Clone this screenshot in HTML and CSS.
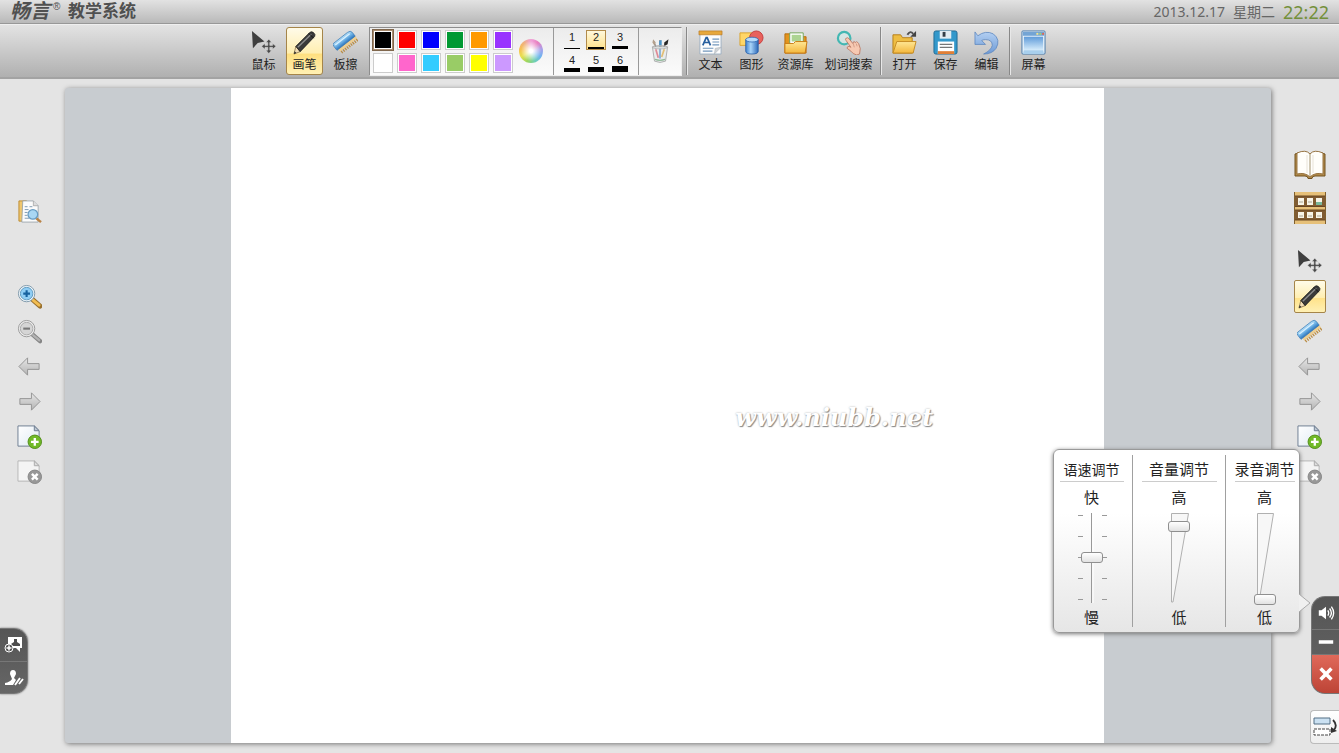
FILE: index.html
```html
<!DOCTYPE html>
<html lang="zh-CN">
<head>
<meta charset="utf-8">
<title>畅言教学系统</title>
<link rel="stylesheet" href="styles.css">
</head>
<body>
<svg class="sprite" aria-hidden="true">
  <defs>
    <linearGradient id="g-blue" x1="0" y1="0" x2="1" y2="0"><stop offset="0" stop-color="#3f82cf"/><stop offset=".4" stop-color="#a9d4f8"/><stop offset="1" stop-color="#2b68b8"/></linearGradient>
    <linearGradient id="g-comb" x1="0" y1="0" x2="0" y2="1"><stop offset="0" stop-color="#b5dff8"/><stop offset=".5" stop-color="#6fb3e6"/><stop offset="1" stop-color="#2c74bd"/></linearGradient>
    <linearGradient id="g-fold" x1="0" y1="0" x2="0" y2="1"><stop offset="0" stop-color="#ffe795"/><stop offset="1" stop-color="#f3b73d"/></linearGradient>
    <linearGradient id="g-gray" x1="0" y1="0" x2="0" y2="1"><stop offset="0" stop-color="#e6e6e6"/><stop offset="1" stop-color="#b4b4b4"/></linearGradient>
    <linearGradient id="g-screen" x1="0" y1="0" x2="0" y2="1"><stop offset="0" stop-color="#5f9bd9"/><stop offset="1" stop-color="#d6ecfb"/></linearGradient>
    <linearGradient id="g-page" x1="0" y1="0" x2="1" y2="1"><stop offset="0" stop-color="#ffffff"/><stop offset="1" stop-color="#dfeaf3"/></linearGradient>
    <linearGradient id="g-undo" x1="0" y1="0" x2="0" y2="1"><stop offset="0" stop-color="#b4d0f2"/><stop offset="1" stop-color="#6d9ad6"/></linearGradient>
  </defs>
  <symbol id="mouse" viewBox="0 0 26 26"><path d="M1 1l1 18 5-5.500 7-1.500z" fill="#3f3f3f"/><path d="M18.500 9.500l3 3.500h-2v3h3v-2l3.500 3-3.500 3v-2h-3v3h2l-3 3.500-3-3.500h2v-3h-3v2l-3.500-3 3.500-3v2h3v-3h-2z" fill="#4a4a4a" stroke="#ddd" stroke-width=".5"/></symbol>
  <symbol id="pencil" viewBox="0 0 26 26"><path d="M2 25l2-8 4.500 5.500z" fill="#f3ddb4" stroke="#806b45" stroke-width=".8"/><path d="M2 25l.8-3 1.700 2z" fill="#222"/><path d="M4 17L18.500 2.500q2-1.500 4 .3 2.300 2 1 4L8.500 22.500z" fill="#3a3a3a" stroke="#191919" stroke-width=".8"/><path d="M6 18L20 4.500" stroke="#8c8c8c" stroke-width="1.500"/><path d="M17.500 3.500l5 5" stroke="#111" stroke-width="1"/></symbol>
  <symbol id="comb" viewBox="0 0 26 26"><g transform="rotate(-38 13 13)"><path d="M4 14v6M6.500 14v6M9 14v6M11.500 14v6M14 14v6M16.500 14v6M19 14v6M21.500 14v6M24 14v6" stroke="#b98c45" stroke-width="1.300"/><path d="M3 13h22v4H3z" fill="#edce91"/><path d="M3 6h18q4 0 4 3v5H1V9q0-3 2-3z" fill="url(#g-comb)" stroke="#3778b4" stroke-width=".7"/><path d="M3 8.500h19" stroke="#d8f0ff" stroke-width="1.500"/></g></symbol>
  <symbol id="cup" viewBox="0 0 26 30"><path d="M9 14L6 4M13 14V2M16 14l4-9" stroke="#7f7064" stroke-width="1.500"/><path d="M5 1l3 4-2 3-2-3z" fill="#b4a08c"/><path d="M12 3l3-1v8h-3z" fill="#4c94c9"/><path d="M18 5l5-4-1 6-4 2z" fill="#252525"/><path d="M4 10h18l-2.500 17q-6.500 3-13 0z" fill="#e9ecec" stroke="#a5a5a5"/><path d="M8 13l3 10" stroke="#df8a96" stroke-width="2"/><path d="M13 12v12" stroke="#80abd5" stroke-width="2"/><path d="M18 13l-3 9" stroke="#e2bd73" stroke-width="2"/><path d="M7 25q6 2 12 0" fill="none" stroke="#91b99a" stroke-width="1.500"/><ellipse cx="13" cy="10.500" rx="9" ry="2" fill="none" stroke="#b1b1b1"/></symbol>
  <symbol id="textdoc" viewBox="0 0 26 26"><path d="M2 2h22v23H2z" fill="#fdfdfd" stroke="#9db0c2"/><path d="M1 1h24v4H1z" fill="#e7a83c" stroke="#b97924" stroke-width=".7"/><path d="M5 16l3.500-8h1l3.500 8M6.500 13h5" fill="none" stroke="#285f9e" stroke-width="1.800"/><path d="M15 9.500h7M15 12.500h7M15 15.500h7M5 19h11M5 22h10" stroke="#7196bc" stroke-width="1.200"/><path d="M24 18l-6 1-1 6z" fill="#d0d5d9" stroke="#a5abb0" stroke-width=".5"/></symbol>
  <symbol id="shapes" viewBox="0 0 26 26"><path d="M1 3h14v13H1z" fill="#ffd667" stroke="#dba22d"/><circle cx="18" cy="8" r="7" fill="#e8625c" stroke="#c63e40"/><path d="M7 10v12q0 3 6.500 3t6.500-3V10z" fill="url(#g-blue)" stroke="#245ba6" stroke-width=".8"/><ellipse cx="13.500" cy="10" rx="6.500" ry="2.500" fill="#b5dafa" stroke="#2d66b0" stroke-width=".8"/></symbol>
  <symbol id="resource" viewBox="0 0 26 26"><path d="M2 4h8l2 3h12v17H2z" fill="#e2951e" stroke="#b86c10"/><path d="M7 3h14v13H7z" fill="#fff" stroke="#70a356"/><path d="M9 5h10v7H9z" fill="#acd492"/><path d="M2 24V14h9l2-2h12l-2 12z" fill="url(#g-fold)" stroke="#c87b12"/></symbol>
  <symbol id="search-hand" viewBox="0 0 26 26"><circle cx="8.500" cy="8.500" r="6.500" fill="#d4f3ef" fill-opacity=".5" stroke="#43b7b2" stroke-width="2.300"/><path d="M10 9q2-2 3.500 0l4 5 1-2 2 1 1-1 2 2q3 5 1 11l-3 1q-4-1-6-4l-4-3q0-2 2-2l2 1-5-7q-1-1-.5-2z" fill="#f7c9b2" stroke="#bb7864" stroke-width=".9"/><path d="M18 14l1 4M21 14l1 3" stroke="#c58a76" stroke-width=".7"/></symbol>
  <symbol id="open" viewBox="0 0 26 26"><path d="M1 5h8l2 3h10v16H1z" fill="#eebd43" stroke="#b67f19"/><path d="M1 24l4-12h20l-3 12z" fill="url(#g-fold)" stroke="#c58b23"/><path d="M16 5q3-5 6-1" fill="none" stroke="#505050" stroke-width="2"/><path d="M25 1v6h-6z" fill="#444"/></symbol>
  <symbol id="save" viewBox="0 0 26 26"><rect x="1" y="1" width="24" height="24" rx="2" fill="#3398cb" stroke="#216994"/><path d="M7 1h12v8H7z" fill="#e3edf3"/><path d="M10 2h3v5h-3z" fill="#343f48"/><path d="M5 12h17v13H5z" fill="#fff"/><path d="M7 15h13M7 18h13" stroke="#777" stroke-width="1.200"/><path d="M5 22h17v3H5z" fill="#e07f36"/></symbol>
  <symbol id="undo" viewBox="0 0 26 26"><path d="M1 2l3 4Q12 0 20 4q8 6 3 15-4 6-13 6 8-4 9-9 0-6-7-6-3 0-4 1l4 4H1z" fill="url(#g-undo)" stroke="#5c86bd" stroke-width=".8"/></symbol>
  <symbol id="screen" viewBox="0 0 26 26"><rect x="1" y="1" width="24" height="24" rx="1" fill="#e6f1fa" stroke="#4779aa"/><path d="M2 2h22v4H2z" fill="#73a4d4"/><path d="M16 3h2v2h-2z" fill="#f8e38b"/><path d="M19 3h2v2h-2z" fill="#a9d06b"/><path d="M22 3h2v2h-2z" fill="#df6754"/><path d="M3 7h20v14H3z" fill="url(#g-screen)"/><path d="M3 21h20l1 4H2z" fill="#a8cfed"/></symbol>
  <symbol id="preview" viewBox="0 0 26 26"><path d="M2 2h8v21H2z" fill="#efc66e" stroke="#bd8b32"/><path d="M6 2h11l5 5v17H5z" fill="#fbfbfb" stroke="#8f9aa3" stroke-width=".8"/><path d="M17 2v5h5" fill="#ddd" stroke="#999" stroke-width=".7"/><path d="M8 8h3M13 8h3M8 11h4M8 14h3M8 17h3M8 20h5" stroke="#7e9ab2"/><path d="M20 20l5 4" stroke="#b98346" stroke-width="2.500"/><circle cx="16.500" cy="16" r="5" fill="#a9d7f4" stroke="#679bc2" stroke-width="1.300"/></symbol>
  <symbol id="zoom-in" viewBox="0 0 26 26"><path d="M16 16l8 7" stroke="#99702d" stroke-width="5" stroke-linecap="round"/><path d="M17 17l6 5" stroke="#f2bd52" stroke-width="3" stroke-linecap="round"/><circle cx="10" cy="10" r="8.500" fill="#f1f7fa" stroke="#7e98aa"/><circle cx="10" cy="10" r="6.500" fill="#8fcdf4" stroke="#609abf"/><path d="M10 6.500v7M6.500 10h7" stroke="#17629f" stroke-width="2.200"/></symbol>
  <symbol id="zoom-out" viewBox="0 0 26 26"><path d="M16 16l8 7" stroke="#858585" stroke-width="4.500" stroke-linecap="round"/><path d="M17 17l6 5" stroke="#b3b3b3" stroke-width="2.500" stroke-linecap="round"/><circle cx="10" cy="10" r="8.500" fill="#eee" stroke="#999"/><circle cx="10" cy="10" r="6.500" fill="#d5d5d5" stroke="#aaa"/><path d="M6.500 10h7" stroke="#777" stroke-width="2.200"/></symbol>
  <symbol id="left" viewBox="0 0 26 26"><path d="M2 13l9-9v6h12v6H11v6z" fill="url(#g-gray)" stroke="#949494"/></symbol>
  <symbol id="right" viewBox="0 0 26 26"><path d="M24 13l-9-9v6H3v6h12v6z" fill="url(#g-gray)" stroke="#949494"/></symbol>
  <symbol id="page-add" viewBox="0 0 26 26"><path d="M1 2h17l5 5v16H1z" fill="url(#g-page)" stroke="#6d7d91"/><path d="M18 2v5h5z" fill="#bdc8d4" stroke="#6d7d91"/><circle cx="18.500" cy="18.500" r="7" fill="#70b927" stroke="#518d18"/><path d="M18.500 14.500v8M14.500 18.500h8" stroke="#fff" stroke-width="2.400"/></symbol>
  <symbol id="page-del" viewBox="0 0 26 26"><path d="M1 2h17l5 5v16H1z" fill="#f4f4f4" stroke="#b5b5b5"/><path d="M18 2v5h5z" fill="#ddd" stroke="#aaa"/><circle cx="18.500" cy="18.500" r="7" fill="#989898" stroke="#858585"/><path d="M15.500 15.500l6 6M21.500 15.500l-6 6" stroke="#fff" stroke-width="2.500"/></symbol>
  <symbol id="book" viewBox="0 0 32 30"><path d="M1 4v22h10q3 0 3 2.500h4q0-2.500 3-2.500h10V4l-3-1v20H4V3z" fill="#b18a4a" stroke="#72521f"/><path d="M3 3q9-4 13 1 4-5 13-1v21q-8-2-13 3-5-5-13-3z" fill="#fffefa" stroke="#977442"/><path d="M16 4v22" stroke="#c1b69c" stroke-width="1.500"/><path d="M13 5v18M19 5v18" stroke="#e8e3d8"/></symbol>
  <symbol id="shelf" viewBox="0 0 32 32"><path d="M0 0h32v32H0z" fill="#805c33"/><path d="M1 0h30v4H1zM1 15h30v3H1zM1 28h30v4H1z" fill="#e6c079"/><path d="M0 4h32M0 14.500h32M0 18h32M0 28h32" stroke="#684622"/><path d="M4 6h6v7H4zM13 6h6v7h-6zM22 6h6v7h-6zM4 20h6v6H4zM13 20h6v6h-6zM22 20h6v6h-6z" fill="#f7f4e8"/><path d="M5 10h4M14 10h4M5 24h4M14 24h4M23 24h4" stroke="#a9a594"/><path d="M22 10h6v3h-6z" fill="#79b89b"/><path d="M.5 0v32M31.500 0v32" stroke="#80602f"/></symbol>
  <symbol id="user-add" viewBox="0 0 20 18"><path d="M4 1h14v11h-2v4l-4-4H4z" fill="#fff"/><path d="M10 3h3v3l3 2v2H7V8l3-2z" fill="#4d4d4d"/><circle cx="5" cy="12" r="4" fill="#555" stroke="#fff"/><path d="M5 9.500v5M2.500 12h5" stroke="#fff" stroke-width="1.500"/></symbol>
  <symbol id="user-pen" viewBox="0 0 20 18"><path d="M6 5q0-4 3-4t3 4l-2 4 2 2-3 5H1v-2q5-1 7-4z" fill="#fff"/><path d="M11 16l5-7M15 15l4-5" stroke="#fff" stroke-width="1.900"/></symbol>
  <symbol id="speaker" viewBox="0 0 20 20"><path d="M2 7h3l5-4v14l-5-4H2z" fill="#fff"/><path d="M12 7q2 3 0 6M14 5q4 5 0 10M16 3q5 7 0 14" fill="none" stroke="#fff" stroke-width="1.500"/></symbol>
  <symbol id="minus" viewBox="0 0 20 20"><path d="M2 8h16v4H2z" fill="#fff"/></symbol>
  <symbol id="close" viewBox="0 0 20 20"><path d="M4 4l12 12M16 4L4 16" stroke="#fff" stroke-width="4"/></symbol>
  <symbol id="swap" viewBox="0 0 26 24"><path d="M2 3h16v6H2z" fill="#cbe1f2" stroke="#536e84"/><path d="M2 14h16v6H2z" fill="#fff" stroke="#444" stroke-dasharray="3 1"/><path d="M21 5q5 5 1 10" fill="none" stroke="#333" stroke-width="1.800"/><path d="M19 12v6l6-2z" fill="#333"/></symbol>
</svg>

<header class="titlebar">
  <h1 class="brand"><span class="brand-mark">畅言</span><span class="reg">®</span><span class="brand-name">教学系统</span></h1>
  <div class="clock"><span>2013.12.17</span><span>星期二</span><time class="time">22:22</time></div>
</header>

<nav class="toolbar" aria-label="工具栏">
  <div class="group">
    <button class="tool"><svg><use href="#mouse"/></svg>鼠标</button>
    <button class="tool active"><svg><use href="#pencil"/></svg>画笔</button>
    <button class="tool"><svg><use href="#comb"/></svg>板擦</button>
  </div>
  <div class="options">
    <div class="swatches">
      <button class="swatch black chosen" aria-label="黑色"></button>
      <button class="swatch red" aria-label="红色"></button>
      <button class="swatch blue" aria-label="蓝色"></button>
      <button class="swatch green" aria-label="绿色"></button>
      <button class="swatch orange" aria-label="橙色"></button>
      <button class="swatch purple" aria-label="紫色"></button>
      <button class="swatch white" aria-label="白色"></button>
      <button class="swatch pink" aria-label="粉色"></button>
      <button class="swatch sky" aria-label="天蓝"></button>
      <button class="swatch lime" aria-label="浅绿"></button>
      <button class="swatch yellow" aria-label="黄色"></button>
      <button class="swatch lilac" aria-label="淡紫"></button>
    </div>
    <button class="wheel" aria-label="更多颜色"></button>
    <div class="widths">
      <button class="width w1">1</button>
      <button class="width w2 picked">2</button>
      <button class="width w3">3</button>
      <button class="width w4">4</button>
      <button class="width w5">5</button>
      <button class="width w6">6</button>
    </div>
    <button class="cup" aria-label="笔筒"><svg><use href="#cup"/></svg></button>
  </div>
  <div class="group ruled">
    <button class="tool"><svg><use href="#textdoc"/></svg>文本</button>
    <button class="tool"><svg><use href="#shapes"/></svg>图形</button>
    <button class="tool wide"><svg><use href="#resource"/></svg>资源库</button>
    <button class="tool wider"><svg><use href="#search-hand"/></svg>划词搜索</button>
  </div>
  <div class="group ruled">
    <button class="tool"><svg><use href="#open"/></svg>打开</button>
    <button class="tool"><svg><use href="#save"/></svg>保存</button>
    <button class="tool"><svg><use href="#undo"/></svg>编辑</button>
  </div>
  <div class="group ruled">
    <button class="tool"><svg><use href="#screen"/></svg>屏幕</button>
  </div>
</nav>

<main class="workspace">
  <aside class="side side-left">
    <button class="side-btn spaced" aria-label="预览"><svg><use href="#preview"/></svg></button>
    <button class="side-btn" aria-label="放大"><svg><use href="#zoom-in"/></svg></button>
    <button class="side-btn" aria-label="缩小"><svg><use href="#zoom-out"/></svg></button>
    <button class="side-btn" aria-label="上一页"><svg><use href="#left"/></svg></button>
    <button class="side-btn" aria-label="下一页"><svg><use href="#right"/></svg></button>
    <button class="side-btn" aria-label="新建页"><svg><use href="#page-add"/></svg></button>
    <button class="side-btn" aria-label="删除页"><svg><use href="#page-del"/></svg></button>
  </aside>
  <section class="board">
    <div class="paper"><span class="watermark">www.niubb.net</span></div>
  </section>
  <aside class="side side-right">
    <button class="side-btn big" aria-label="课本"><svg><use href="#book"/></svg></button>
    <button class="side-btn big last" aria-label="书架"><svg><use href="#shelf"/></svg></button>
    <button class="side-btn" aria-label="鼠标"><svg><use href="#mouse"/></svg></button>
    <button class="side-btn on" aria-label="画笔"><svg><use href="#pencil"/></svg></button>
    <button class="side-btn" aria-label="板擦"><svg><use href="#comb"/></svg></button>
    <button class="side-btn" aria-label="上一页"><svg><use href="#left"/></svg></button>
    <button class="side-btn" aria-label="下一页"><svg><use href="#right"/></svg></button>
    <button class="side-btn" aria-label="新建页"><svg><use href="#page-add"/></svg></button>
    <button class="side-btn" aria-label="删除页"><svg><use href="#page-del"/></svg></button>
  </aside>
</main>

<div class="dock dock-left">
  <button class="dock-btn" aria-label="添加用户"><svg><use href="#user-add"/></svg></button>
  <button class="dock-btn" aria-label="用户书写"><svg><use href="#user-pen"/></svg></button>
</div>
<div class="dock dock-right">
  <button class="dock-btn" aria-label="音量"><svg><use href="#speaker"/></svg></button>
  <button class="dock-btn short" aria-label="最小化"><svg><use href="#minus"/></svg></button>
  <button class="dock-btn danger" aria-label="关闭"><svg><use href="#close"/></svg></button>
</div>
<button class="swap" aria-label="切换工具栏位置"><svg><use href="#swap"/></svg></button>

<section class="mixer">
  <div class="channel speed">
    <label for="speed">语速调节</label>
    <span class="end">快</span>
    <div class="fader">
      <svg viewBox="0 0 34 90"><path d="M16.500 0v90" stroke="#999"/><path d="M18 0v90" stroke="#fff"/><path d="M3 2.500h5M27 2.500h5M3 23.500h5M27 23.500h5M3 44.500h5M27 44.500h5M3 65.500h5M27 65.500h5M3 86.500h5M27 86.500h5" stroke="#999"/></svg>
      <input id="speed" type="range" min="0" max="100" value="51">
    </div>
    <span class="end">慢</span>
  </div>
  <div class="channel volume">
    <label for="volume">音量调节</label>
    <span class="end">高</span>
    <div class="fader">
      <svg viewBox="0 0 34 90"><path d="M9.500 .5h17L11 89H9.500z" fill="#f7f7f7" stroke="#b0b0b0"/></svg>
      <input id="volume" type="range" min="0" max="100" value="88">
    </div>
    <span class="end">低</span>
  </div>
  <div class="channel record">
    <label for="record">录音调节</label>
    <span class="end">高</span>
    <div class="fader">
      <svg viewBox="0 0 34 90"><path d="M9.500 .5h16L11 89H9.500z" fill="#f7f7f7" stroke="#b0b0b0"/></svg>
      <input id="record" type="range" min="0" max="100" value="0">
    </div>
    <span class="end">低</span>
  </div>
  <svg class="tail" viewBox="0 0 12 20"><path d="M0 1l11 9L0 19z" fill="#f0f0f0"/><path d="M0 1l11 9L0 19" fill="none" stroke="#aaa"/></svg>
</section>
</body>
</html>
```

FILE: styles.css
```css
* { box-sizing: border-box; }

body {
  margin: 0;
  height: 100vh;
  display: flex;
  flex-direction: column;
  position: relative;
  overflow: hidden;
  background: #e4e4e4;
  color: #222;
  font-family: "Noto Sans", "Noto Sans CJK SC", sans-serif;
  font-size: 12px;
}

button {
  margin: 0;
  padding: 0;
  border: 0;
  background: none;
  color: inherit;
  font: inherit;
  cursor: pointer;
}

svg { display: block; }
.sprite { position: absolute; width: 0; height: 0; }

/* Title bar */
.titlebar {
  flex: none;
  height: 24px;
  padding: 0 10px;
  display: flex;
  justify-content: space-between;
  align-items: center;
  border-bottom: 1px solid #989898;
  background: linear-gradient(#e2e2e2, #b9b9b9);
}
.brand {
  margin: 0;
  display: flex;
  align-items: center;
  color: #505050;
  font-family: "Liberation Sans", "Noto Sans CJK SC", sans-serif;
  font-size: 17px;
  font-weight: 700;
  line-height: 23px;
}
.brand-mark { font-size: 20px; font-style: italic; }
.reg {
  width: 18px;
  padding-left: 3px;
  align-self: flex-start;
  font-size: 10px;
  font-weight: 400;
  line-height: 14px;
}
.clock {
  display: flex;
  align-items: center;
  gap: 8px;
  color: #666;
  font-size: 14px;
  line-height: 22px;
}
.time { color: #73903a; font-size: 18px; }

/* Toolbar */
.toolbar {
  flex: none;
  height: 55px;
  padding-left: 243px;
  display: flex;
  align-items: center;
  border-top: 1px solid #efefef;
  border-bottom: 2px solid #a3a3a3;
  background: linear-gradient(#e3e3e3, #b0b0b0);
}
.group { display: flex; align-items: center; height: 48px; }
.group.ruled {
  padding: 0 2px 0 3px;
  border-left: 1px solid #888;
  box-shadow: inset 1px 0 #e8e8e8;
}
.group .tool {
  width: 37px;
  height: 48px;
  margin: 0 2px;
  display: flex;
  flex-direction: column;
  align-items: center;
  gap: 2px;
  padding-top: 2px;
  border: 1px solid transparent;
  border-radius: 3px;
  line-height: 16px;
  white-space: nowrap;
}
.tool svg { width: 25px; height: 25px; }
.group .wide { width: 43px; }
.group .wider { width: 55px; }
.group .active { border-color: #a58549; background: linear-gradient(#fffbe9, #ffeeb0 55%, #ffdf7e 56%, #fff0b4); }

.options {
  height: 49px;
  margin: 0 4px 0 3px;
  display: flex;
  align-items: center;
  border: 1px solid #8d8d8d;
  border-right-color: #eee;
  border-bottom-color: #eee;
  background: linear-gradient(#ececec, #fbfbfb);
}
.swatches {
  display: grid;
  grid-template-columns: repeat(6, 20px);
  gap: 3px 4px;
  padding: 0 3px;
}
.swatch { width: 20px; height: 20px; border: 1px solid #ccc; box-shadow: inset 0 0 0 1px #fff; }
.chosen { outline: 1px solid #80674d; border-color: #a98c70; }
.black { background: #000; }
.red { background: #f00; }
.blue { background: #00f; }
.green { background: #093; }
.orange { background: #f90; }
.purple { background: #93f; }
.white { background: #fff; }
.pink { background: #f6c; }
.sky { background: #3cf; }
.lime { background: #9c6; }
.yellow { background: #ff0; }
.lilac { background: #c9f; }
.wheel {
  width: 24px;
  height: 24px;
  margin: 0 10px 0 3px;
  border-radius: 50%;
  background:
    radial-gradient(circle, #fff 10%, transparent 60%),
    conic-gradient(#f0a0d8, #e87fc0, #a9a2ea, #6fb4f0, #6fd0b4, #9cd660, #e8e050, #f7c050, #efb080, #f0a0d8);
}
.widths {
  display: grid;
  grid-template-columns: repeat(3, 20px);
  gap: 3px 4px;
  padding: 0 8px;
  border-left: 1px solid #999;
  border-right: 1px solid #999;
  height: 47px;
  align-content: center;
}
.width {
  height: 20px;
  display: flex;
  flex-direction: column;
  align-items: center;
  justify-content: space-between;
  border: 1px solid transparent;
  font-family: "Liberation Sans", sans-serif;
  font-size: 11px;
  line-height: 12px;
}
.width::after { content: ""; width: 16px; height: 1px; background: #000; }
.w2::after { height: 2px; }
.w3::after { height: 3px; }
.w4::after { height: 4px; }
.w5::after { height: 5px; }
.w6::after { height: 6px; }
.picked { border-color: #b28b4b; background: linear-gradient(#fff8dc, #ffe18a); }
.cup { width: 42px; display: flex; justify-content: center; }
.cup svg { width: 22px; height: 26px; }

/* Workspace */
.workspace { flex: 1; min-height: 0; display: flex; }
.side { flex: none; display: flex; flex-direction: column; align-items: center; }
.side-left { width: 65px; padding: 115px 7px 0 0; }
.side-right { width: 68px; padding: 64px 0 0 9px; }
.side-btn { width: 32px; height: 35px; display: grid; place-items: center; flex: none; }
.side-btn svg { width: 25px; height: 25px; }
.side .spaced { margin-bottom: 50px; }
.side .big { height: 43px; }
.side .last { margin-bottom: 15px; }
.big svg { width: 32px; height: 32px; }
.side .on {
  height: 33px;
  margin: 1px 0;
  border: 1px solid #a58549;
  border-radius: 2px;
  background: linear-gradient(#fffbe9, #ffeeb0 55%, #ffe28a 56%, #fff0b4);
}
.board {
  flex: 1;
  margin: 9px 0 10px;
  padding: 0 167px 0 166px;
  display: flex;
  border-radius: 3px;
  background: #c8ccd0;
  box-shadow: 1px 1px 5px #777;
}
.paper {
  flex: 1;
  padding: 4px 171px 0 0;
  display: flex;
  align-items: center;
  justify-content: flex-end;
  background: #fff;
}
.watermark {
  color: #fff;
  font: italic 700 24px "DejaVu Serif", serif;
  text-shadow: 1px 1px 1px #888, 0 0 2px #aaa;
}

/* Edge docks lie over the workspace */
.dock {
  position: absolute;
  width: 28px;
  overflow: hidden;
  border: 1px solid #777;
  background: linear-gradient(#555, #666);
  display: flex;
  flex-direction: column;
}
.dock-left { left: 0; bottom: 59px; border-left: 0; border-radius: 0 14px 14px 0; box-shadow: 0 0 2px #666; }
.dock-right { right: 0; bottom: 59px; border-right: 0; border-radius: 14px 0 0 14px; }
.dock-btn { height: 32px; display: grid; place-items: center; }
.dock-btn + .dock-btn { border-top: 1px solid #777; }
.dock-btn svg { width: 20px; height: 18px; }
.dock .short { height: 25px; }
.dock .danger { height: 39px; background: linear-gradient(#e0695a, #bd4436); }
.swap {
  position: absolute;
  right: 0;
  bottom: 9px;
  width: 29px;
  height: 34px;
  display: grid;
  place-items: center;
  border: 1px solid #bbb;
  border-right: 0;
  border-radius: 4px 0 0 4px;
  background: linear-gradient(#fff, #eee);
}
.swap svg { width: 26px; height: 24px; }

/* Audio popup */
.mixer {
  position: absolute;
  right: 39px;
  bottom: 120px;
  padding: 5px 0;
  display: flex;
  border: 1px solid #999;
  border-radius: 6px;
  background: linear-gradient(#fff 35%, #e6e6e6);
  box-shadow: 0 1px 4px #777;
  color: #222;
}
.channel { display: flex; flex-direction: column; align-items: center; width: 93px; }
.channel + .channel { border-left: 1px solid #a0a0a0; }
.channel label {
  width: 75px;
  height: 27px;
  border-bottom: 1px solid #ccc;
  font-size: 15px;
  line-height: 29px;
  text-align: center;
  white-space: nowrap;
}
.mixer .speed { width: 78px; padding-right: 3px; }
.speed label { width: 64px; font-size: 14px; }
.mixer .record { width: 74px; padding-left: 4px; }
.record label { width: 60px; }
.end { height: 29px; font-size: 15px; line-height: 30px; }
.fader { display: grid; height: 90px; }
.fader > * { grid-area: 1 / 1; place-self: center; }
.fader svg { width: 34px; height: 90px; }
.end:last-child { line-height: 32px; height: 26px; }
input[type="range"] {
  appearance: none;
  writing-mode: vertical-lr;
  direction: rtl;
  width: 22px;
  height: 94px;
  margin: 0;
  background: transparent;
}
input[type="range"]::-webkit-slider-thumb {
  appearance: none;
  width: 22px;
  height: 11px;
  border: 1px solid #8f8f8f;
  border-radius: 3px;
  background: linear-gradient(#fff, #e2e2e2);
}
.tail { position: absolute; left: 100%; bottom: 19px; width: 12px; height: 20px; }
```
